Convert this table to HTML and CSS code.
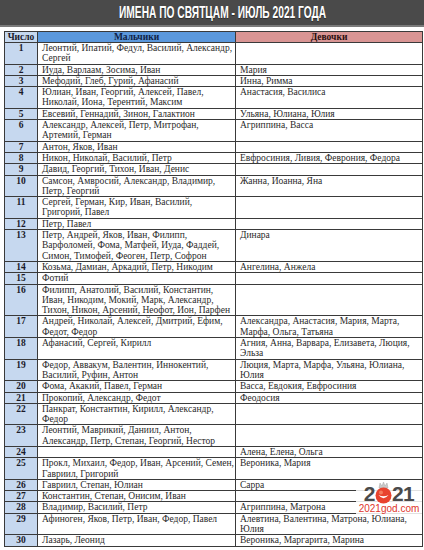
FILE: index.html
```html
<!DOCTYPE html>
<html lang="ru">
<head>
<meta charset="utf-8">
<link rel="stylesheet" href="styles.css">
</head>
<body>
<div class="page">
  <header class="banner"><h1 class="title">ИМЕНА ПО СВЯТЦАМ - ИЮЛЬ 2021 ГОДА</h1></header>
  <table class="names">
    <colgroup><col class="c-num"><col class="c-boys"><col class="c-girls"></colgroup>
    <thead>
      <tr><th class="h-num">Число</th><th class="h-boys">Мальчики</th><th class="h-girls">Девочки</th></tr>
    </thead>
    <tbody>
      <tr><td class="num">1</td><td>Леонтий, Ипатий, Федул, Василий, Александр,<br>Сергей</td><td></td></tr>
      <tr><td class="num">2</td><td>Иуда, Варлаам, Зосима, Иван</td><td>Мария</td></tr>
      <tr><td class="num">3</td><td>Мефодий, Глеб, Гурий, Афанасий</td><td>Инна, Римма</td></tr>
      <tr><td class="num">4</td><td>Юлиан, Иван, Георгий, Алексей, Павел,<br>Николай, Иона, Терентий, Максим</td><td>Анастасия, Василиса</td></tr>
      <tr><td class="num">5</td><td>Евсевий, Геннадий, Зинон, Галактион</td><td>Ульяна, Юлиана, Юлия</td></tr>
      <tr><td class="num">6</td><td>Александр, Алексей, Петр, Митрофан,<br>Артемий, Герман</td><td>Агриппина, Васса</td></tr>
      <tr><td class="num">7</td><td>Антон, Яков, Иван</td><td></td></tr>
      <tr><td class="num">8</td><td>Никон, Николай, Василий, Петр</td><td>Евфросиния, Ливия, Феврония, Федора</td></tr>
      <tr><td class="num">9</td><td>Давид, Георгий, Тихон, Иван, Денис</td><td></td></tr>
      <tr><td class="num">10</td><td>Самсон, Амвросий, Александр, Владимир,<br>Петр, Георгий</td><td>Жанна, Иоанна, Яна</td></tr>
      <tr><td class="num">11</td><td>Сергей, Герман, Кир, Иван, Василий,<br>Григорий, Павел</td><td></td></tr>
      <tr><td class="num">12</td><td>Петр, Павел</td><td></td></tr>
      <tr><td class="num">13</td><td>Петр, Андрей, Яков, Иван, Филипп,<br>Варфоломей, Фома, Матфей, Иуда, Фаддей,<br>Симон, Тимофей, Феоген, Петр, Софрон</td><td>Динара</td></tr>
      <tr><td class="num">14</td><td>Козьма, Дамиан, Аркадий, Петр, Никодим</td><td>Ангелина, Анжела</td></tr>
      <tr><td class="num">15</td><td>Фотий</td><td></td></tr>
      <tr><td class="num">16</td><td>Филипп, Анатолий, Василий, Константин,<br>Иван, Никодим, Мокий, Марк, Александр,<br>Тихон, Никон, Арсений, Неофот, Ион, Парфен</td><td></td></tr>
      <tr><td class="num">17</td><td>Андрей, Николай, Алексей, Дмитрий, Ефим,<br>Федот, Федор</td><td>Александра, Анастасия, Мария, Марта,<br>Марфа, Ольга, Татьяна</td></tr>
      <tr><td class="num">18</td><td>Афанасий, Сергей, Кирилл</td><td>Агния, Анна, Варвара, Елизавета, Люция,<br>Эльза</td></tr>
      <tr><td class="num">19</td><td>Федор, Аввакум, Валентин, Иннокентий,<br>Василий, Руфин, Антон</td><td>Люция, Марта, Марфа, Ульяна, Юлиана,<br>Юлия</td></tr>
      <tr><td class="num">20</td><td>Фома, Акакий, Павел, Герман</td><td>Васса, Евдокия, Евфросиния</td></tr>
      <tr><td class="num">21</td><td>Прокопий, Александр, Федот</td><td>Феодосия</td></tr>
      <tr><td class="num">22</td><td>Панкрат, Константин, Кирилл, Александр,<br>Федор</td><td></td></tr>
      <tr><td class="num">23</td><td>Леонтий, Маврикий, Даниил, Антон,<br>Александр, Петр, Степан, Георгий, Нестор</td><td></td></tr>
      <tr><td class="num">24</td><td></td><td>Алена, Елена, Ольга</td></tr>
      <tr><td class="num">25</td><td>Прокл, Михаил, Федор, Иван, Арсений, Семен,<br>Гавриил, Григорий</td><td>Вероника, Мария</td></tr>
      <tr><td class="num">26</td><td>Гавриил, Степан, Юлиан</td><td>Сарра</td></tr>
      <tr><td class="num">27</td><td>Константин, Степан, Онисим, Иван</td><td></td></tr>
      <tr><td class="num">28</td><td>Владимир, Василий, Петр</td><td>Агриппина, Матрона</td></tr>
      <tr><td class="num">29</td><td>Афиноген, Яков, Петр, Иван, Федор, Павел</td><td>Алевтина, Валентина, Матрона, Юлиана,<br>Юлия</td></tr>
      <tr><td class="num">30</td><td>Лазарь, Леонид</td><td>Вероника, Маргарита, Марина</td></tr>
    </tbody>
  </table>
  <div class="logo">
    <div class="logo-year">
      <span class="digit">2</span>
      <svg class="ball" width="17" height="22" viewBox="0 0 17 22">
        <path d="M4 6 L5 1 L7 4 L8.5 0 L10 4 L12 1 L13 6 Z" fill="#c9c9c9" stroke="#a8a8a8" stroke-width="0.5"/>
        <circle cx="8.5" cy="13.5" r="8" fill="#e8422e"/>
        <circle cx="6" cy="10.5" r="2" fill="#f47a5c"/>
        <path d="M3.5 13 Q8.5 19.5 13.5 13 Q8.5 15.5 3.5 13 Z" fill="#ffffff"/>
      </svg>
      <span class="digit">21</span>
    </div>
    <div class="logo-site">2021god.com</div>
  </div>
</div>
</body>
</html>
```

FILE: styles.css
```css
html, body {
  margin: 0;
  padding: 0;
  background: #ffffff;
}
.page {
  position: relative;
  width: 424px;
  height: 550px;
  overflow: hidden;
}
.banner {
  height: 25px;
  background: #4a4a4a;
  border-bottom: 2px solid #7a7a7a;
  display: flex;
  align-items: center;
  justify-content: center;
}
.title {
  margin: 0 0 0 22px;
  display: inline-block;
  white-space: nowrap;
  font-family: "Liberation Sans", Arial, sans-serif;
  font-weight: 700;
  font-size: 17px;
  line-height: 20px;
  color: #ffffff;
  transform: scaleX(0.6);
  text-shadow: 0 1px 1px rgba(0,0,0,0.4);
}
.names {
  margin: 4px 0 0 4px;
  width: 418px;
  border-collapse: collapse;
  table-layout: fixed;
}
.c-num { width: 33px; }
.c-boys { width: 198px; }
.c-girls { width: 187px; }
.names th, .names td {
  font-family: "Liberation Serif", "Times New Roman", serif;
  font-size: 9.5px;
  color: #2a2a2a;
  border: 1px solid #3a3a3a;
  padding: 0 0 0 4px;
  line-height: 10.3px;
  vertical-align: top;
  text-align: left;
  white-space: nowrap;
  overflow: hidden;
}
.names th {
  font-weight: 700;
  text-align: center;
  padding: 0;
  line-height: 10px;
  color: #1a1a2a;
}
.names th.h-num { background: #c5d8ef; }
.names th.h-boys { background: #5b98dc; color: #0f1f45; }
.names th.h-girls { background: #d99594; color: #2a0e0e; }
.names td.num {
  background: #c6d8ef;
  font-weight: 700;
  text-align: center;
  padding: 0;
  color: #1a1a2a;
}
.logo {
  position: absolute;
  left: 356px;
  top: 481px;
  width: 66px;
  display: flex;
  flex-direction: column;
  align-items: center;
  background: rgba(255,255,255,0.85);
}
.logo-year {
  display: flex;
  align-items: flex-end;
  height: 22px;
}
.digit {
  font-family: "Liberation Sans", Arial, sans-serif;
  font-weight: 700;
  font-size: 21px;
  line-height: 19px;
  color: #4a4a4a;
  letter-spacing: -0.5px;
}
.ball {
  display: block;
  margin: 0 0 -1px 0;
}
.logo-site {
  font-family: "Liberation Sans", Arial, sans-serif;
  font-size: 10px;
  line-height: 11px;
  color: #e0362c;
  font-weight: 400;
}
```
